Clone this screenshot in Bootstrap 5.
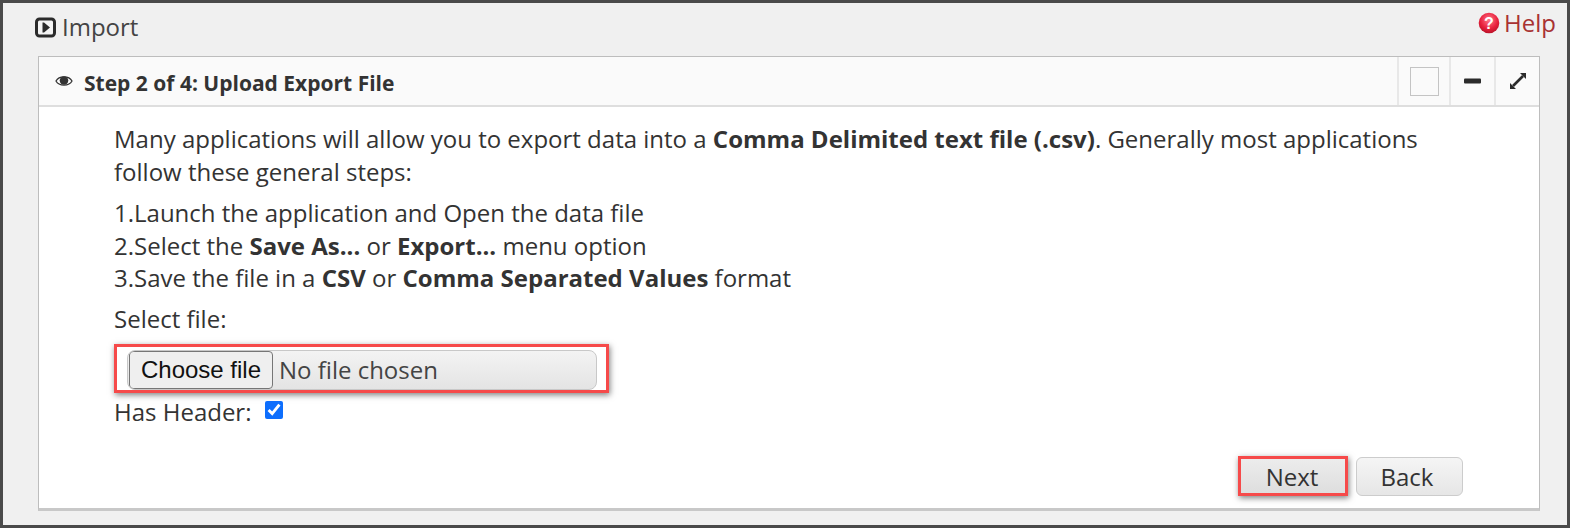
<!DOCTYPE html>
<html lang="en">
<head>
<meta charset="utf-8">
<title>Import</title>
<link href="https://cdn.jsdelivr.net/npm/bootstrap@5.3.0/dist/css/bootstrap.min.css" rel="stylesheet">
<style>
html,body{height:100%;}
body{font-family:"Open Sans",sans-serif;background:#f0f0f0;color:#333;border:3px solid #4a4a4a;overflow:hidden;}
.page-wrap{height:100%;padding:0 11px 0 32px;}
.top-line{height:53px;padding-top:8px;}
.page-title{font-size:24px;line-height:32px;color:#444;}
.page-icon{margin-right:6px;}
.help-link{font-size:24px;line-height:30px;color:#a83232;text-decoration:none;margin-top:-3px;}
.panel-box{margin-left:3px;width:1502px;height:455px;background:#fff;border:1px solid #bdbdbd;border-bottom:3px solid #c8c8c8;}
.panel-head{height:50px;background:#fafafa;border-bottom:2px solid #dedede;}
.panel-name{font-size:21px;font-weight:700;color:#333;margin-left:11px;padding-top:5px;}
.head-tool{width:45px;border-left:2px solid #e8e8e8;}
.tool-wide{width:52px;}
.tool-square{width:29px;height:29px;border:1px solid #c4c4c4;}
.panel-main{padding:16px 76px 0 75px;font-size:24px;line-height:32.5px;color:#333;}
.panel-main p{margin:0 0 9px;}
.steps-list{margin-bottom:8px;}
.red-mark{border:3px solid #f64a4a;box-shadow:1px 2px 6px rgba(0,0,0,.5);}
.file-mark{width:495px;height:49px;padding:3px 10px;margin-top:9px;background:#fff;}
.file-field{width:470px;height:40px;font-size:24px;line-height:38px;color:#444;border:1px solid #c8c8c8;border-radius:8px;background:linear-gradient(#f3f3f3,#e4e4e4);overflow:hidden;}
.file-pick{font-family:"Liberation Sans",sans-serif;font-size:24px;line-height:1;color:#111;height:38px;width:144px;padding:0;margin:0 6px 0 1px;border:1px solid #767676;border-radius:4px;background:#efefef;}
.header-row{line-height:32px;height:32px;margin-top:3px;}
.header-check{width:18px;height:18px;margin:0 0 9px 14px;accent-color:#0d6efd;vertical-align:middle;}
.foot-row{margin-top:28px;gap:8px;}
.act-btn{font-size:24px;line-height:30px;color:#333;height:39px;border-radius:6px;background:linear-gradient(#f5f5f5,#e6e6e6);border:1px solid #ccc;padding:0;text-align:center;}
.back-btn{width:107px;margin-top:1px;padding:1px 5px 0 0;}
.next-btn{width:110px;height:40px;border:3px solid #f64a4a;border-radius:0;box-shadow:1px 2px 6px rgba(0,0,0,.5);line-height:32px;padding:2px 2px 0 0;background:linear-gradient(#ececec,#dedede);}
</style>
</head>
<body>
<div class="page-wrap">
  <div class="top-line d-flex justify-content-between align-items-start">
    <div class="page-title d-flex align-items-center">
      <svg width="21" height="21" viewBox="0 0 21 21" class="page-icon" aria-hidden="true"><rect x="1.5" y="2" width="18" height="17" rx="3" fill="#f4f4f4" stroke="#2b2b2b" stroke-width="3"/><path d="M7.5 5.5 H9 L15 10.5 L9 15.5 H7.5Z" fill="#2b2b2b"/></svg>
      <span>Import</span>
    </div>
    <a class="help-link d-flex align-items-center" href="#">
      <svg width="22" height="22" viewBox="0 0 22 22" class="me-1" aria-hidden="true"><defs><radialGradient id="rg" cx=".5" cy=".35" r=".7"><stop offset="0" stop-color="#ff7a8c"/><stop offset=".6" stop-color="#e8203c"/><stop offset="1" stop-color="#b01024"/></radialGradient></defs><circle cx="11" cy="11" r="10.3" fill="url(#rg)"/><text x="11" y="17" text-anchor="middle" font-family="Liberation Sans" font-weight="700" font-size="16" fill="#fff">?</text></svg>
      <span>Help</span>
    </a>
  </div>
  <div class="panel-box">
    <div class="panel-head d-flex align-items-stretch">
      <div class="d-flex align-items-center flex-grow-1 ps-3">
        <svg width="18" height="14" viewBox="0 0 18 14" aria-hidden="true"><path d="M1 7 C4 1.5 14 1.5 17 7 C14 12.5 4 12.5 1 7Z" fill="#fff" stroke="#333" stroke-width="1.3"/><circle cx="9" cy="6.5" r="4.3" fill="#333"/></svg>
        <span class="panel-name">Step 2 of 4: Upload Export File</span>
      </div>
      <div class="head-tool tool-wide d-flex align-items-center justify-content-center"><div class="tool-square"></div></div>
      <div class="head-tool d-flex align-items-center justify-content-center"><svg width="17" height="6" viewBox="0 0 17 6" aria-hidden="true"><rect width="17" height="5" y=".5" rx="1" fill="#2b2b2b"/></svg></div>
      <div class="head-tool d-flex align-items-center justify-content-center"><svg width="20" height="20" viewBox="0 0 20 20" aria-hidden="true"><path d="M5 15 L15 5" stroke="#2b2b2b" stroke-width="2.6"/><path d="M12 2 H18 V8Z M2 12 V18 H8Z" fill="#2b2b2b"/></svg></div>
    </div>
    <div class="panel-main">
      <p>Many applications will allow you to export data into a <strong>Comma Delimited text file (.csv)</strong>. Generally most applications follow these general steps:</p>
      <div class="steps-list">
        <div>1.Launch the application and Open the data file</div>
        <div>2.Select the <strong>Save As...</strong> or <strong>Export...</strong> menu option</div>
        <div>3.Save the file in a <strong>CSV</strong> or <strong>Comma Separated Values</strong> format</div>
      </div>
      <div>Select file:</div>
      <div class="red-mark file-mark"><div class="file-field d-flex align-items-center"><button type="button" class="file-pick">Choose file</button><span>No file chosen</span></div></div>
      <div class="header-row"><label for="hh">Has Header:</label><input id="hh" type="checkbox" class="header-check" checked></div>
      <div class="foot-row d-flex justify-content-end">
        <button type="button" class="act-btn next-btn">Next</button>
        <button type="button" class="act-btn back-btn">Back</button>
      </div>
    </div>
  </div>
</div>
</body>
</html>
